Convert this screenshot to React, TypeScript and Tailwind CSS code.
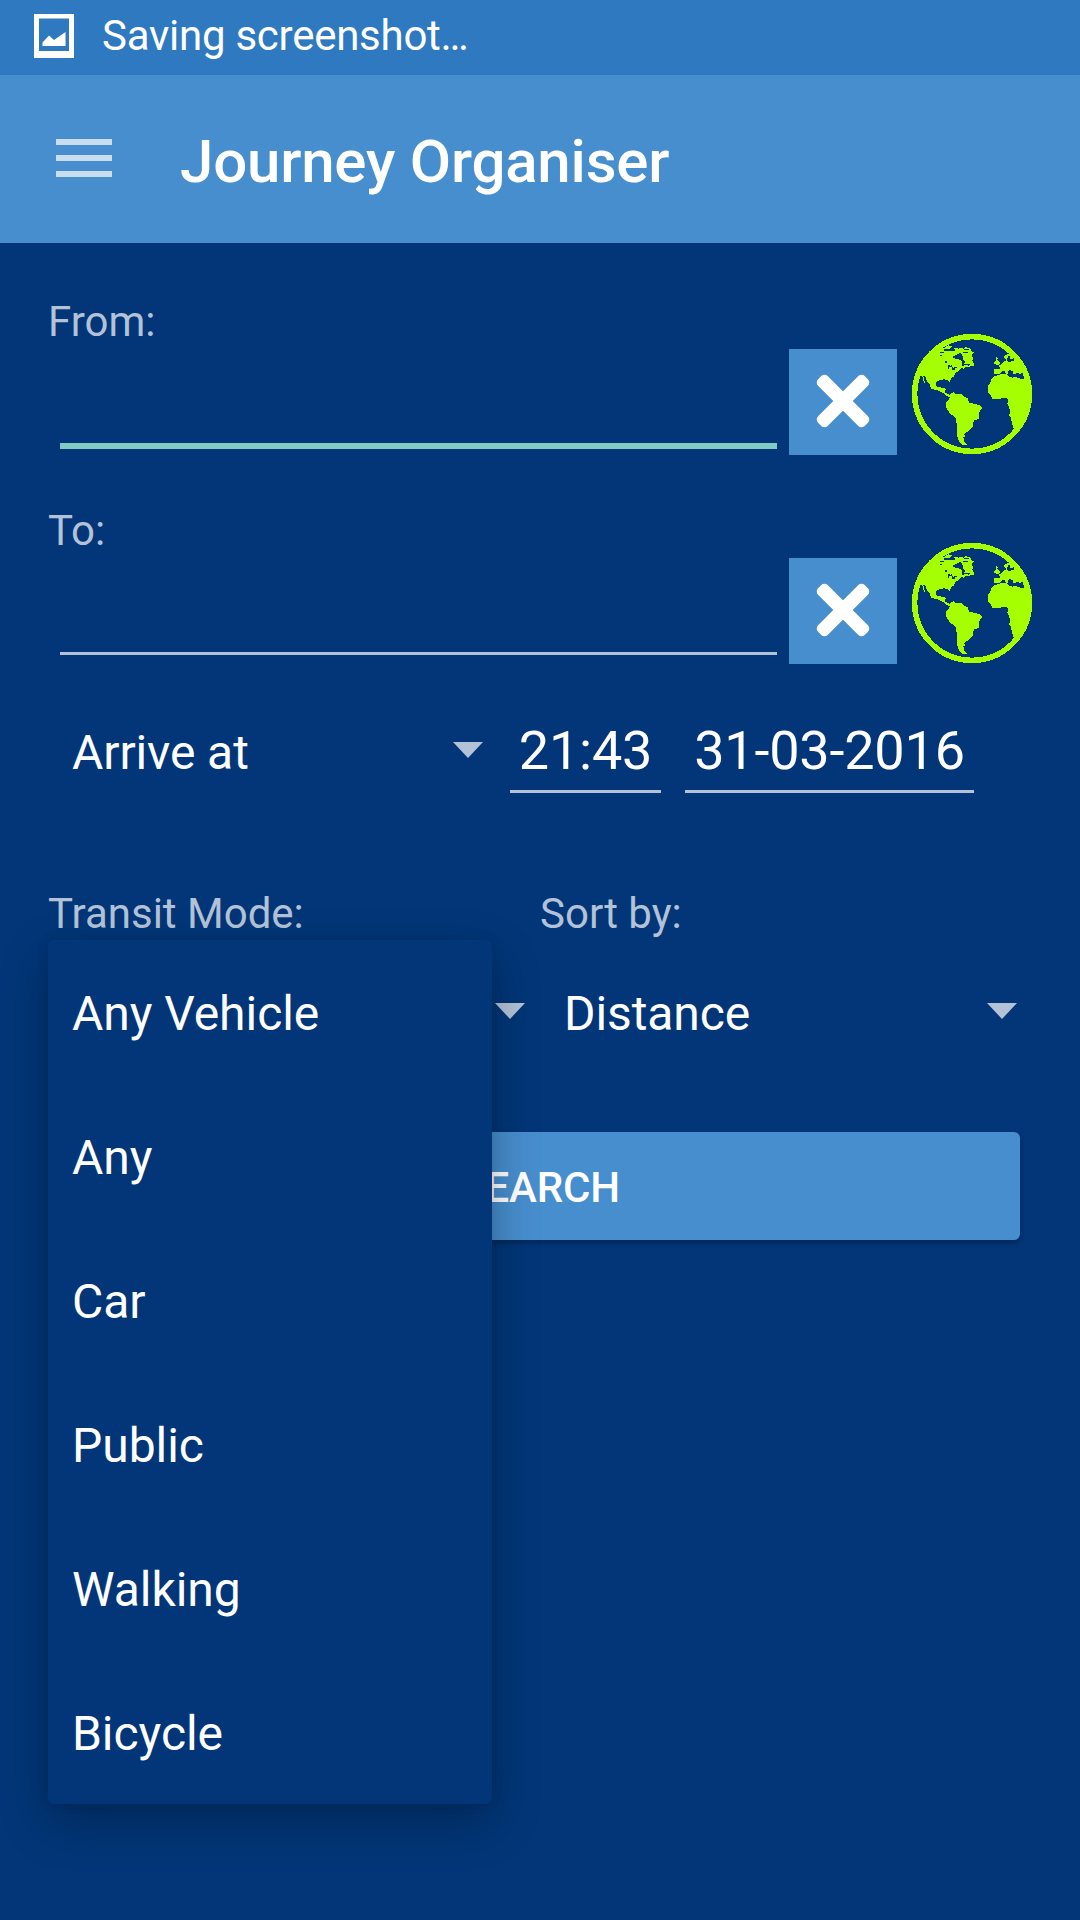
import React from "react";

const transitModes = ["Any Vehicle", "Any", "Car", "Public", "Walking", "Bicycle"];

function ScreenshotIcon() {
  return (
    <svg className="h-11 w-10 shrink-0" viewBox="0 0 40 44" fill="#fff">
      <path fillRule="evenodd" d="M0 0H40V44H0ZM5 4.500V37H35V4.500Z" />
      <path d="M8.500 32V28.500L15 21.500L20 26L31.500 18V32Z" />
    </svg>
  );
}

function Globe() {
  return (
    <svg className="h-[120px] w-[120px] shrink-0" viewBox="36 42 360 360" fill="#a5ff00" shapeRendering="crispEdges">
      <circle cx="216" cy="222" r="172" fill="none" stroke="#a5ff00" strokeWidth="16.500" />
      <path d="M58 163L56 150L78 112L100 92L122 82L133 83L146 76L156 80L148 87L133 88L133 93L150 92L160 94L166 90L160 86L168 82L176 87L180 82L190 86L196 82L210 84L215 95L224 98L215 102L216 110L221 114L216 122L221 130L222 138L212 137L208 143L199 140L190 146L188 140L196 134L190 130L196 126L189 118L186 124L186 134L190 142L180 148L172 155L165 161L162 169L152 176L150 187L146 187L145 180L132 178L120 180L108 187L107 197L112 201L121 201L124 204L134 203L137 208L134 216L142 222L153 226L150 230L139 229L130 220L112 210L94 207L89 194L80 181L76 168L70 168L72 179L77 192L73 190L67 170Z" />
      <path d="M152 221L161 216L166 221L186 222L192 230L203 234L208 249L222 251L240 257L246 264L238 276L237 297L221 302L218 319L207 333L196 339L192 344L196 349L190 351L192 366L200 374L187 374L178 367L172 350L172 319L166 291L151 282L139 264L139 246L147 239Z" />
      <path d="M283 169L297 164L321 161L324 169L339 173L343 170L356 175L374 177L374 161L366 158L361 164L354 158L343 163L339 160L338 154L328 150L322 155L326 163L320 163L313 153L304 155L298 162L283 161L282 147L298 147L300 142L294 138L306 132L310 125L320 123L314 115L311 108L322 103L329 101L334 94L352 108L376 139L388 177L395 210L395 240L388 274L369 308L342 331L340 322L334 302L333 292L327 287L331 275L326 260L322 252L324 240L319 234L305 234L300 238L278 237L272 226L263 216L263 199L270 190L274 178Z" />
      <path d="M287 111L293 114L292 119L300 129L298 134L284 137L289 131L282 132L282 125L289 123Z" />
      <path
        fill="#023678"
        d="M120 97H132V99H120ZM120 105H127V107H120ZM134 122L141 124L139 130L134 129ZM143 137L149 134V137L156 136V140L147 140V147L143 147ZM156 141H159V149H155ZM161 141H171V143H168L162 151L159 150ZM166 104L176 103L181 98L187 104L189 118L184 122L176 117L160 115L158 110L166 108ZM194 134L206 131L209 134L205 137L201 135L195 137ZM191 88H207V91H191ZM188 96H204V98H188ZM323 110L331 105V116L337 119L342 114L343 122L328 126L321 123Z"
      />
    </svg>
  );
}

function Caret() {
  return (
    <svg className="h-4 w-[30px] shrink-0" viewBox="0 0 30 16" fill="#b3c2d6">
      <path d="M0 0H30L15 16Z" />
    </svg>
  );
}

function PlaceField({ label, focused }: { label: string; focused?: boolean }) {
  return (
    <div className="flex h-[209px] flex-col">
      <label className="h-[49px] text-[42px] leading-[49px] text-[#b3c2d6]">{label}</label>
      <div className="mt-0.5 flex items-start">
        <div className="flex h-[108px] w-[729px] flex-col pt-[95px] pl-3">
          <div className={focused ? "h-1.5 shrink-0 bg-[#80cbc4]" : "h-[3px] shrink-0 bg-[#b3c2d6]"} />
        </div>
        <button className="mt-px ml-3 flex h-[106px] w-[108px] shrink-0 items-center justify-center bg-[#478ece]">
          <svg className="-mt-0.5 h-[54px] w-[54px]" viewBox="0 0 54 54" fill="#fff">
            <rect x="-6" y="20.200" width="66" height="13.600" rx="4.500" transform="rotate(45 27 27)" />
            <rect x="-6" y="20.200" width="66" height="13.600" rx="4.500" transform="rotate(-45 27 27)" />
          </svg>
        </button>
        <div className="-mt-[14px] ml-[15px]">
          <Globe />
        </div>
      </div>
    </div>
  );
}

export default function App() {
  return (
    <div className="flex h-[1920px] w-[1080px] flex-col overflow-hidden bg-[#023678] font-['Roboto',sans-serif] text-white">
      <div className="flex h-[75px] shrink-0 items-start gap-[28px] bg-[#2e79c0] pt-[14px] pl-[34px]">
        <ScreenshotIcon />
        <span className="-mt-[3px] text-[42px] leading-[49px] tracking-[-0.26px]">Saving screenshot…</span>
      </div>
      <header className="flex h-[168px] shrink-0 items-center bg-[#478ece] pl-14">
        <div className="-mt-0.5 flex w-14 flex-col gap-2.5">
          <span className="h-1.5 bg-[#c8ddf0]" />
          <span className="h-1.5 bg-[#c8ddf0]" />
          <span className="h-1.5 bg-[#c8ddf0]" />
        </div>
        <h1 className="ml-[68px] pt-[5px] text-[60px] leading-[70px] font-medium tracking-[-0.2px]">Journey Organiser</h1>
      </header>

      <main className="flex flex-col px-12 pt-[54px]">
        <PlaceField label="From:" focused />
        <PlaceField label="To:" />

        <div className="flex h-[78px] items-start">
          <div className="flex h-[70px] w-[435px] items-center justify-between pl-6">
            <span className="mt-1.5 text-[48px] leading-[56px] tracking-[-0.1px]">Arrive at</span>
            <Caret />
          </div>
          <div className="ml-[27px] h-[78px] w-[151px] border-b-[3px] border-[#b3c2d6] text-center text-[54px] leading-[71px] tracking-[-0.2px]">21:43</div>
          <div className="ml-6 h-[78px] w-[289px] border-b-[3px] border-[#b3c2d6] text-center text-[54px] leading-[71px] tracking-[-0.2px]">31-03-2016</div>
        </div>

        <div className="mt-[96px] flex text-[42px] leading-[49px] text-[#b3c2d6]">
          <div className="relative w-[492px]">
            Transit Mode:
            <ul className="absolute top-[51px] left-0 z-10 h-[864px] w-[444px] rounded-md bg-[#023678] text-white shadow-[0_18px_48px_rgba(0,0,0,0.28),0_0_12px_rgba(0,0,0,0.1)]">
              {transitModes.map((mode) => (
                <li key={mode} className="flex h-36 items-center pt-1 pl-6 text-[48px] leading-[56px] tracking-[-0.05px]">
                  {mode}
                </li>
              ))}
            </ul>
          </div>
          <span>Sort by:</span>
        </div>

        <div className="mt-0.5 flex h-36 items-center">
          <div className="-mt-0.5 flex w-[477px] justify-end">
            <Caret />
          </div>
          <div className="-mt-0.5 ml-[39px] flex w-[453px] items-center justify-between">
            <span className="-mb-1.5 text-[48px] leading-[56px] tracking-[-0.1px]">Distance</span>
            <Caret />
          </div>
        </div>

        <button className="mx-3 mt-12 h-[108px] rounded-md bg-[#478ece] pt-0.5 text-[42px] leading-[49px] font-medium tracking-[-0.15px] shadow-[0_3px_5px_rgba(0,0,0,0.3)]">
          SEARCH
        </button>
      </main>
    </div>
  );
}
